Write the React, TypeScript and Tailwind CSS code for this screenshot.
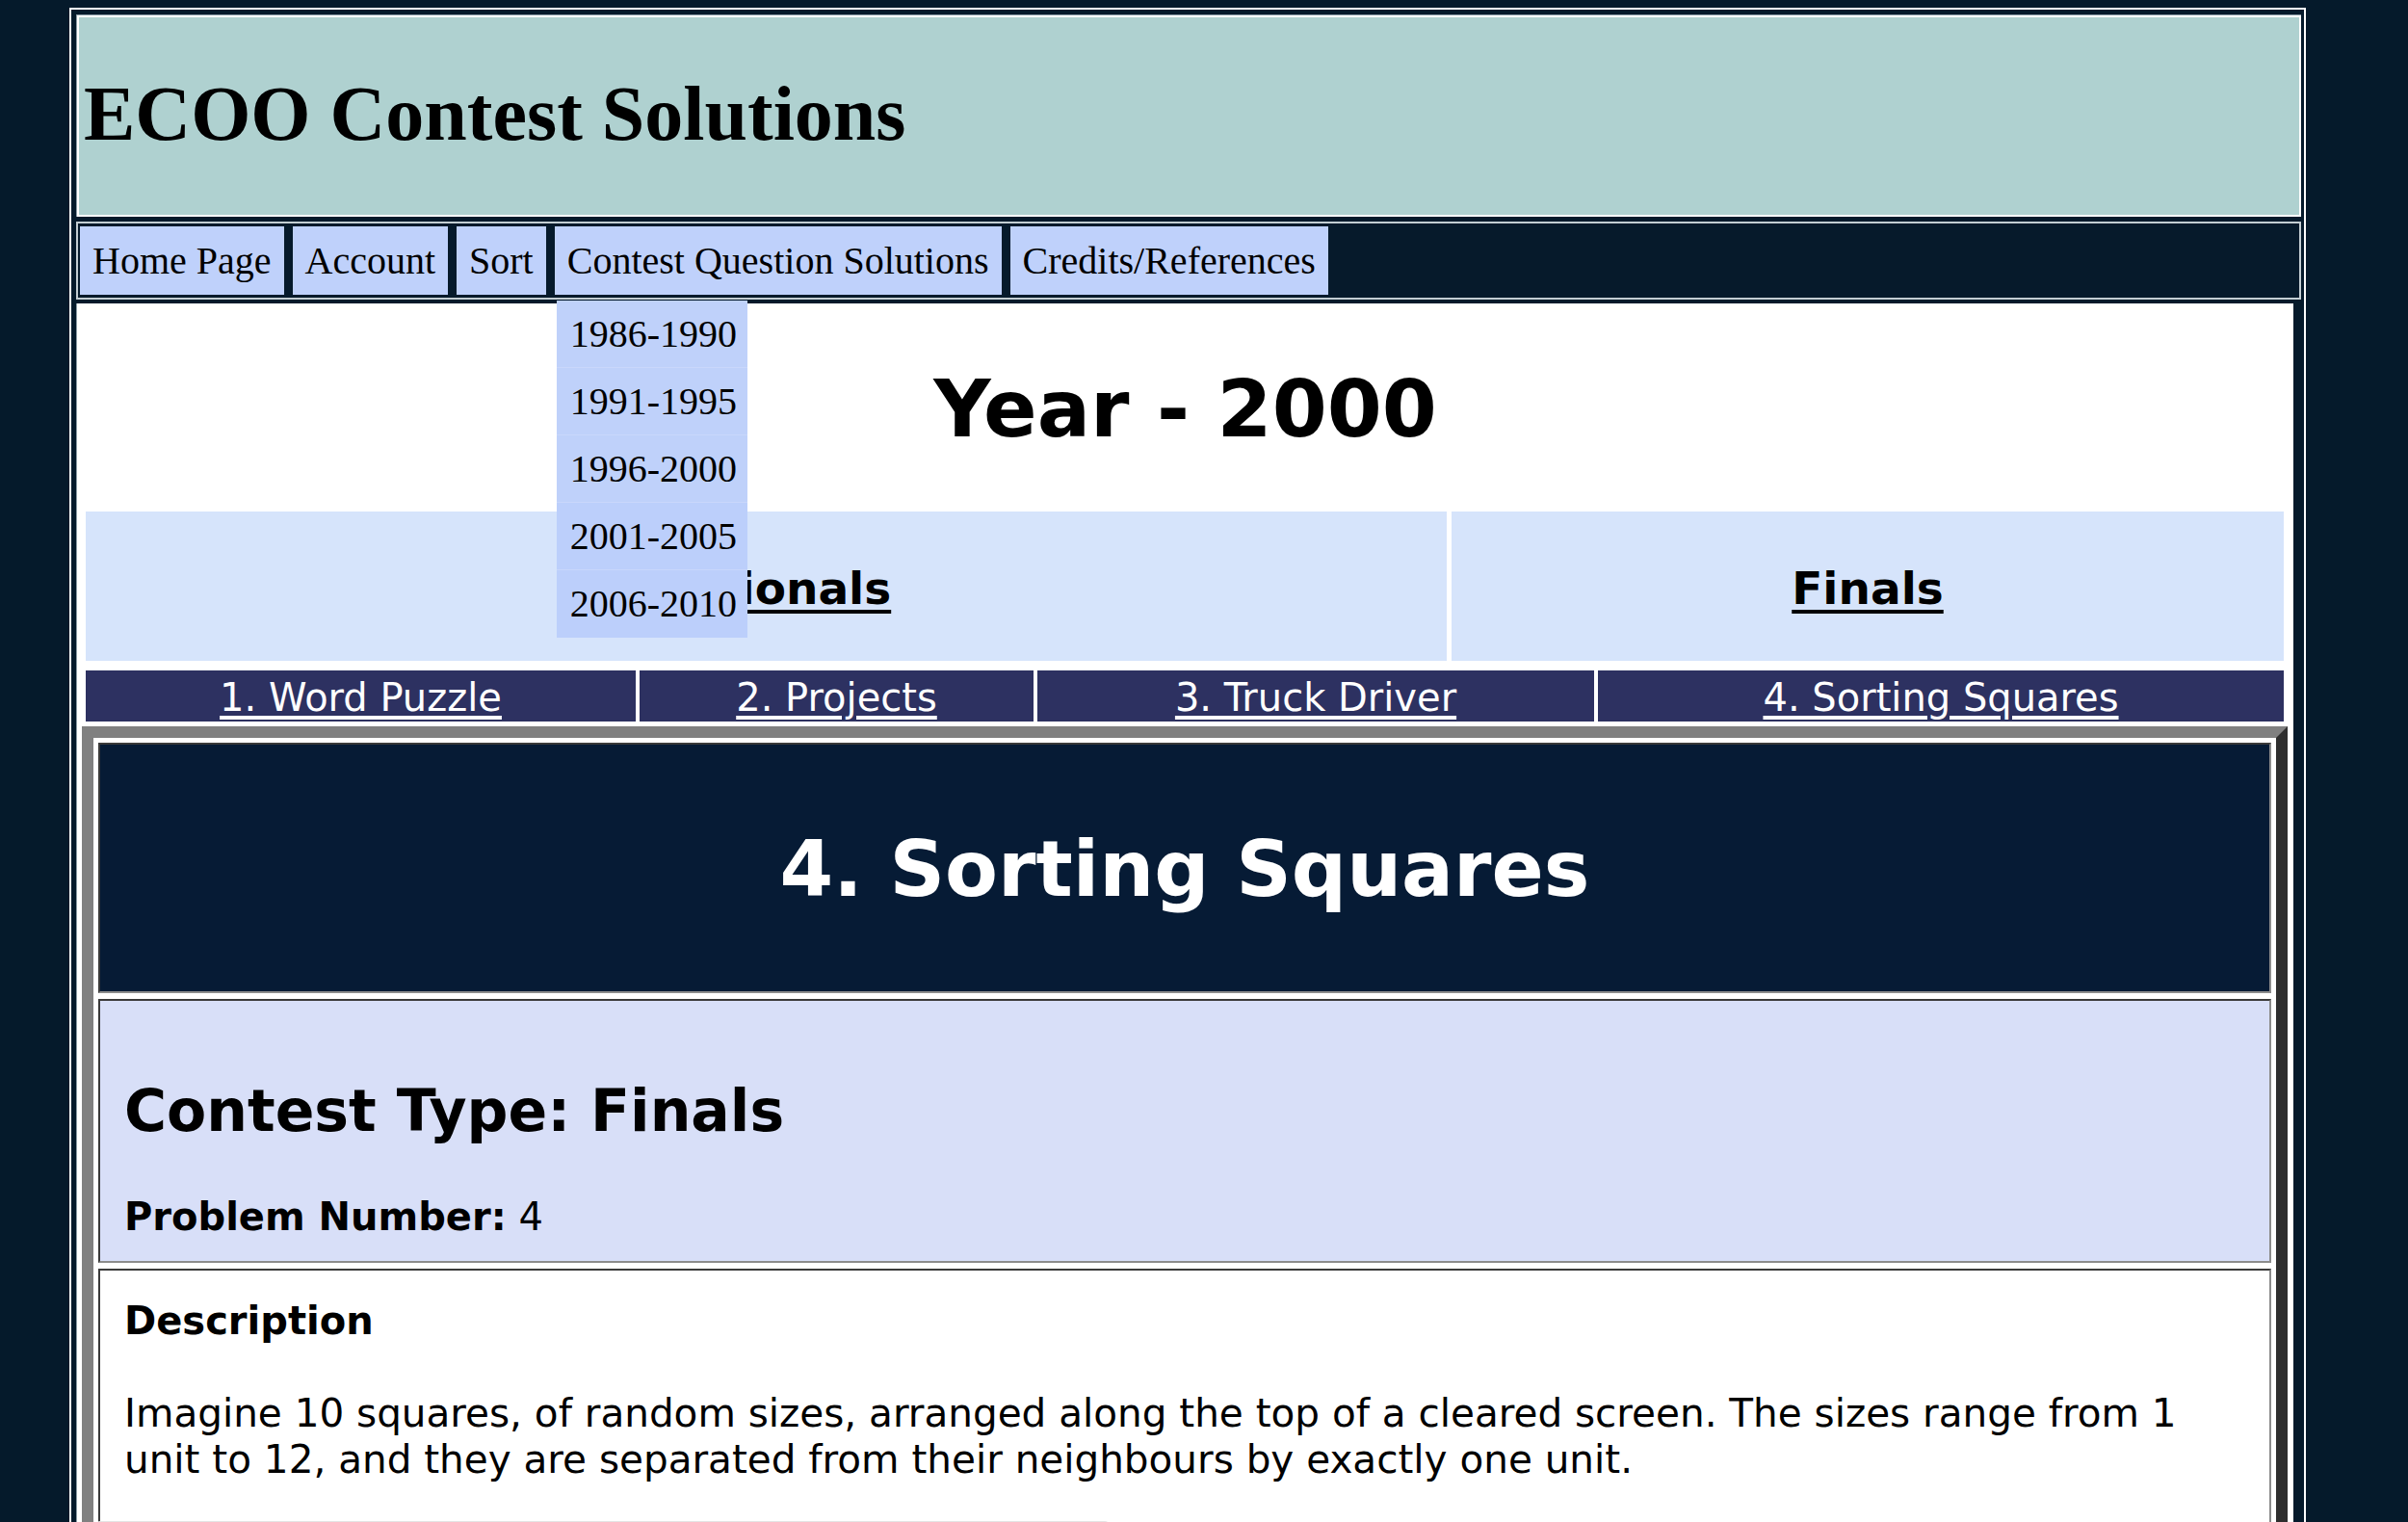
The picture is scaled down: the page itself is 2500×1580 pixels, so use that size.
const navItems = ["Home Page", "Account", "Sort", "Contest Question Solutions", "Credits/References"];
const yearRanges = ["1986-1990", "1991-1995", "1996-2000", "2001-2005", "2006-2010"];
const problems = ["1. Word Puzzle", "2. Projects", "3. Truck Driver", "4. Sorting Squares"];

export default function App() {
    return (
        <div className="min-h-screen bg-[#051a2b] pt-[8px] pl-[72px] font-['DejaVu_Sans',Verdana,sans-serif] text-black">
            <div className="w-[2322px] border-2 border-white pl-[5px] pr-[3px] pt-[5px]">
                {/* Banner */}
                <div className="border-t border-l border-[#8c9ca6]">
                    <div className="flex h-[209px] items-center border-2 border-white bg-[#afd1d0] pb-[6px] pl-[5px]">
                        <h1 className="font-['Liberation_Serif','Times_New_Roman',serif] text-[80px] font-bold leading-[92px]">
                            ECOO Contest Solutions
                        </h1>
                    </div>
                </div>

                {/* Menu */}
                <nav className="mt-[5px] flex gap-[9px] border-2 border-[#c3cdd2] bg-[#061a2b] px-[2px] py-[3px] font-['Liberation_Serif','Times_New_Roman',serif] text-[40px]">
                    {navItems.map((item) => (
                        <div key={item} className="relative">
                            <div className="flex h-[71px] items-center bg-[#bfd1fb] px-[13px] leading-[46px]">
                                {item}
                            </div>
                            {item === "Contest Question Solutions" && (
                                <div className="absolute left-[2px] top-[77px] z-10 w-[198px]">
                                    {yearRanges.map((range, i) => (
                                        <div
                                            key={range}
                                            className={`flex h-[70px] items-center pl-[14px] leading-[46px] ${i < 4 ? "border-b border-[#c9d7fb]" : ""} ${i > 2 ? "bg-[#bccffb]" : "bg-[#bfd1fa]"}`}
                                        >
                                            {range}
                                        </div>
                                    ))}
                                </div>
                            )}
                        </div>
                    ))}
                </nav>

                {/* Page body */}
                <main className="mr-[8px] mt-[4px] border-l border-[#8c9ca6] bg-white pb-[40px]">
                    <h1 className="pt-[63px] text-center text-[82px] font-bold leading-[93px]">Year - 2000</h1>

                    <div className="ml-[9px] mr-[10px] mt-[60px] flex h-[155px] gap-[5px]">
                        <div className="flex w-[1413px] items-center justify-center bg-[#d6e4fb] pt-[5px]">
                            <a className="text-[47px] font-bold underline underline-offset-[6px]">Regionals</a>
                        </div>
                        <div className="flex flex-1 items-center justify-center bg-[#d6e4fb] pt-[5px]">
                            <a className="text-[47px] font-bold underline underline-offset-[6px]">Finals</a>
                        </div>
                    </div>

                    <div className="ml-[9px] mr-[10px] mt-[10px] grid h-[53px] grid-cols-[571px_409px_578px_1fr] gap-[4px]">
                        {problems.map((p) => (
                            <div key={p} className="flex items-center justify-center bg-[#2d3161] pt-[3px]">
                                <a className="text-[40px] leading-[47px] text-white underline underline-offset-[5px]">{p}</a>
                            </div>
                        ))}
                    </div>

                    {/* Problem table */}
                    <div className="ml-[5px] mr-[6px] mt-[5px] border-[12px] border-t-[#808080] border-l-[#808080] border-r-[#2e2e2e] border-b-[#2e2e2e] bg-white p-[5px]">
                        <div className="flex flex-col gap-[6px]">
                            <div className="flex h-[260px] items-center justify-center border-2 border-t-[#3a3a3a] border-l-[#3a3a3a] border-r-[#8c8c8c] border-b-[#8c8c8c] bg-[#061b35] pt-[2px]">
                                <h2 className="text-[80px] font-bold leading-[93px] text-white">4. Sorting Squares</h2>
                            </div>

                            <div className="border-2 border-t-[#3a3a3a] border-l-[#3a3a3a] border-r-[#8c8c8c] border-b-[#8c8c8c] bg-[#d8dff8] px-[25px] pb-[22px] pt-[28px]">
                                <h3 className="mb-[50px] mt-[50px] text-[60px] font-bold leading-[72px]">Contest Type: Finals</h3>
                                <div className="text-[40px] leading-[48px]">
                                    <b>Problem Number:</b> 4
                                </div>
                            </div>

                            <div className="border-2 border-t-[#3a3a3a] border-l-[#3a3a3a] border-r-[#8c8c8c] border-b-[#8c8c8c] bg-white px-[25px] pt-[28px]">
                                <div className="text-[40px] font-bold leading-[48px]">Description</div>
                                <p className="mt-[48px] max-w-[2160px] text-[40.5px] leading-[48px]">
                                    Imagine 10 squares, of random sizes, arranged along the top of a cleared screen. The sizes range from 1 unit to 12, and they are separated from their neighbours by exactly one unit.
                                </p>
                                <div className="-ml-[29px] mt-[40px] h-[60px] w-[1051px] rounded-t-[4px] bg-[#e4e4e4]" />
                                <div className="h-[40px]" />
                            </div>
                        </div>
                    </div>
                </main>
            </div>
        </div>
    );
}
